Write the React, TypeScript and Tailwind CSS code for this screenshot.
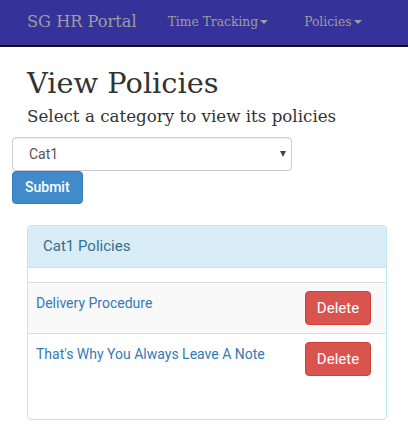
import { useState } from 'react';

const serif = { fontFamily: '"DejaVu Serif", serif' };

export default function App() {
  const [cat, setCat] = useState('Cat1');
  const policies = ['Delivery Procedure', "That's Why You Always Leave A Note"];

  return (
    <div className="w-[408px] h-[433px] bg-white text-[#333]" style={{ fontFamily: 'Roboto, "Liberation Sans", sans-serif' }}>
      <nav className="h-[47px] bg-[#35339a] border-b-2 border-[#111] flex items-center text-[#9d9d9d]" style={serif}>
        <span className="ml-[27px] text-[16.2px] leading-none">SG HR Portal</span>
        <span className="ml-[31px] text-[12.3px] leading-none flex items-center">
          Time Tracking<span className="ml-[2px] border-t-[4px] border-x-[4px] border-x-transparent border-t-[#9d9d9d]" />
        </span>
        <span className="ml-[36px] text-[12.3px] leading-none flex items-center">
          Policies<span className="ml-[2px] border-t-[4px] border-x-[4px] border-x-transparent border-t-[#9d9d9d]" />
        </span>
      </nav>

      <div className="px-[12px]">
        <h1 className="ml-[15px] mt-[18px] text-[28.8px] leading-[36px]" style={serif}>View Policies</h1>
        <h4 className="ml-[15px] mt-[3px] text-[16.7px] leading-[24px]" style={serif}>Select a category to view its policies</h4>
        <div className="relative mt-[9px] w-[280px]">
          <select
            value={cat}
            onChange={e => setCat(e.target.value)}
            className="appearance-none w-full h-[34px] border border-[#ccc] rounded-[4px] bg-white pl-[16px] text-[14px] text-[#555] shadow-[inset_0_1px_1px_rgba(0,0,0,0.075)]"
          >
            <option>Cat1</option>
            <option>Cat2</option>
          </select>
          <span className="absolute right-[6px] top-[14px] border-t-[6px] border-x-[3.5px] border-x-transparent border-t-[#444]" />
        </div>
        <button className="h-[33px] px-[12px] bg-[#428bca] border border-[#357ebd] rounded-[4px] text-white text-[14px] font-medium">
          Submit
        </button>

        <div className="ml-[15px] mt-[21px] w-[360px] h-[195px] border border-[#bce8f1] rounded-[4px] overflow-hidden">
          <div className="h-[42px] bg-[#d9edf7] border-b border-[#bce8f1] flex items-center pl-[15px] text-[#31708f] text-[15px]">
            Cat1 Policies
          </div>
          <div className="h-[15px] border-b border-[#ddd]" />
          {policies.map((p, i) => (
            <div
              key={p}
              className={`flex justify-between items-start pl-[8px] pr-[15px] py-[8px] ${i === 0 ? 'border-b border-[#ddd] bg-[#f9f9f9]' : 'bg-white'}`}
            >
              <a href="#" className="pt-[2px] text-[#337ab7] text-[14px] leading-[20px]">{p}</a>
              <button className="h-[34px] w-[66px] bg-[#d9534f] border border-[#d43f3a] rounded-[4px] text-white text-[15px]">
                Delete
              </button>
            </div>
          ))}
        </div>
      </div>
    </div>
  );
}
